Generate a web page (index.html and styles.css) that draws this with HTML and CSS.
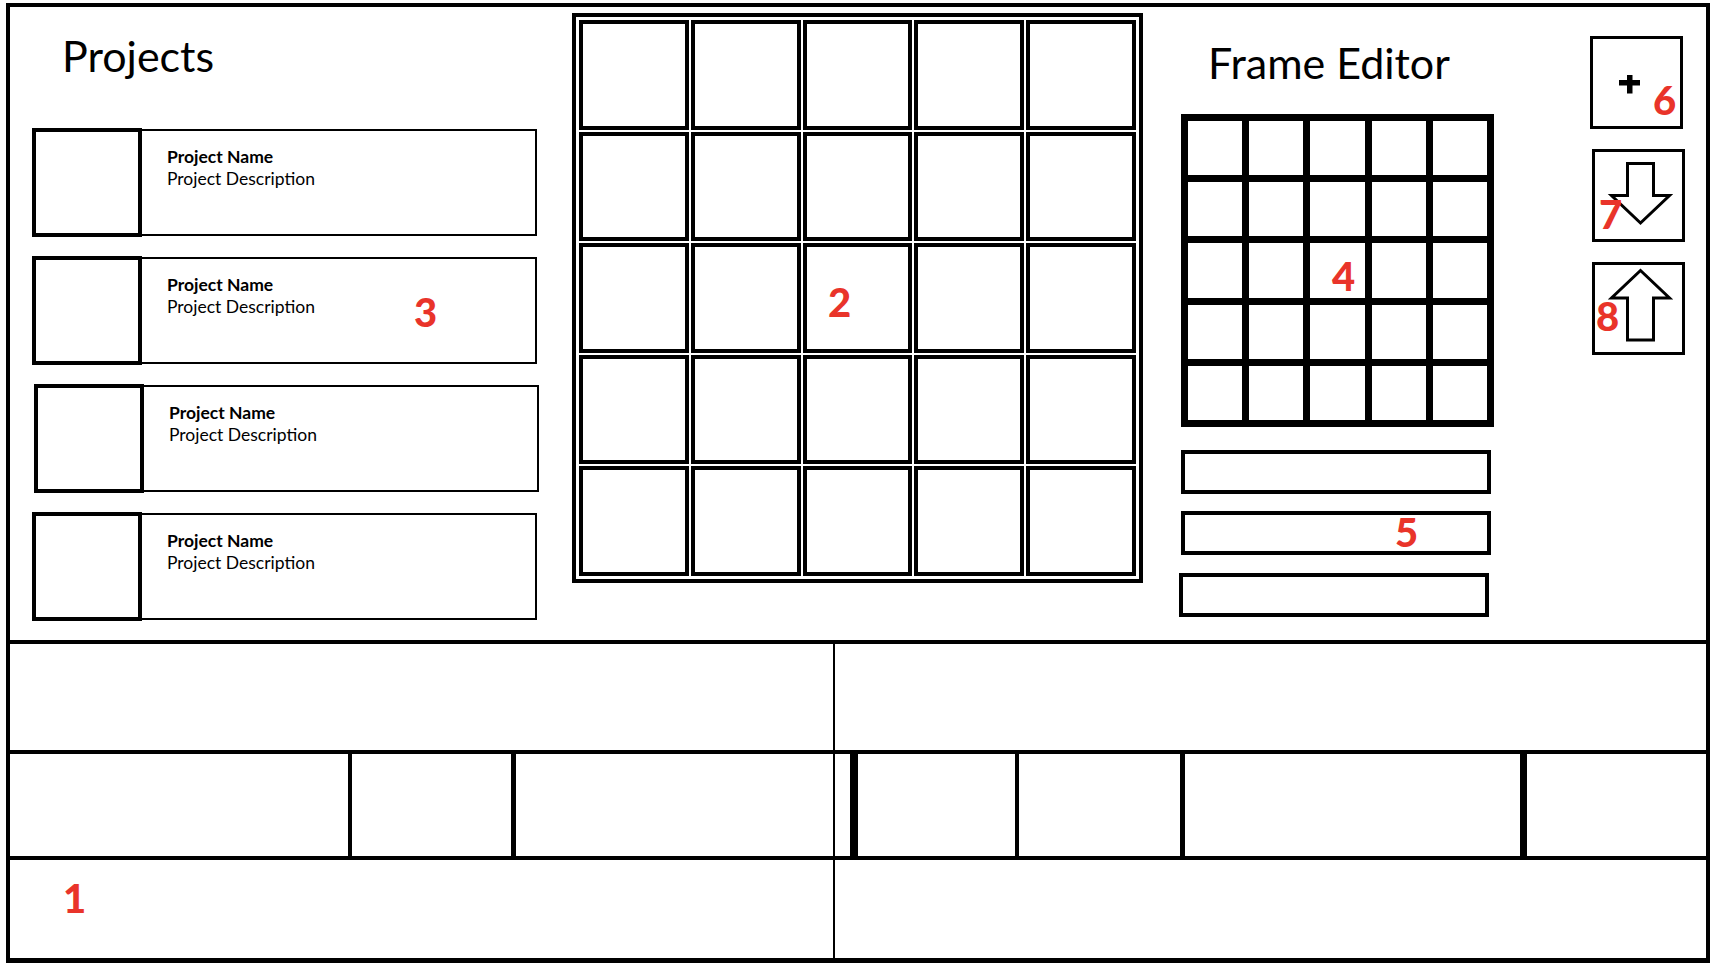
FILE: index.html
```html
<!DOCTYPE html>
<html lang="en">
<head>
    <meta charset="UTF-8">
    <meta name="viewport" content="width=device-width, initial-scale=1.0">
    <title>Frame Editor Wireframe</title>
    <link rel="stylesheet" href="styles.css">
</head>
<body>
    <div class="frame">
        <div class="top">
            <section class="projects">
                <h1 class="title">Projects</h1>
                <div class="card first">
                    <div class="thumb"></div>
                    <div class="info">
                        <p class="name">Project Name</p>
                        <p class="desc">Project Description</p>
                    </div>
                </div>
                <div class="card">
                    <div class="thumb"></div>
                    <div class="info">
                        <p class="name">Project Name</p>
                        <p class="desc">Project Description</p>
                    </div>
                </div>
                <div class="card shifted">
                    <div class="thumb"></div>
                    <div class="info">
                        <p class="name">Project Name</p>
                        <p class="desc">Project Description</p>
                    </div>
                </div>
                <div class="card">
                    <div class="thumb"></div>
                    <div class="info">
                        <p class="name">Project Name</p>
                        <p class="desc">Project Description</p>
                    </div>
                </div>
            </section>

            <div class="board">
                <div class="cell"></div><div class="cell"></div><div class="cell"></div><div class="cell"></div><div class="cell"></div>
                <div class="cell"></div><div class="cell"></div><div class="cell"></div><div class="cell"></div><div class="cell"></div>
                <div class="cell"></div><div class="cell"></div><div class="cell"></div><div class="cell"></div><div class="cell"></div>
                <div class="cell"></div><div class="cell"></div><div class="cell"></div><div class="cell"></div><div class="cell"></div>
                <div class="cell"></div><div class="cell"></div><div class="cell"></div><div class="cell"></div><div class="cell"></div>
            </div>

            <section class="editor">
                <h1 class="title editor-title">Frame Editor</h1>
                <div class="mini">
                    <div class="dot"></div><div class="dot"></div><div class="dot"></div><div class="dot"></div><div class="dot"></div>
                    <div class="dot"></div><div class="dot"></div><div class="dot"></div><div class="dot"></div><div class="dot"></div>
                    <div class="dot"></div><div class="dot"></div><div class="dot"></div><div class="dot"></div><div class="dot"></div>
                    <div class="dot"></div><div class="dot"></div><div class="dot"></div><div class="dot"></div><div class="dot"></div>
                    <div class="dot"></div><div class="dot"></div><div class="dot"></div><div class="dot"></div><div class="dot"></div>
                </div>
                <div class="field"></div>
                <div class="field"></div>
                <div class="field last"></div>
            </section>

            <div class="tools">
                <div class="tool">
                    <svg width="87" height="87" viewBox="0 0 87 87">
                        <rect x="26" y="41" width="21" height="5.5" fill="#000"/>
                        <rect x="34" y="36" width="5.5" height="18.5" fill="#000"/>
                    </svg>
                </div>
                <div class="tool moved">
                    <svg width="87" height="87" viewBox="0 0 87 87">
                        <polygon points="32.5,11.5 58.5,11.5 58.5,43.5 74.5,43.5 45.5,71 16.5,43.5 32.5,43.5" fill="none" stroke="#000" stroke-width="3"/>
                    </svg>
                </div>
                <div class="tool moved">
                    <svg width="87" height="87" viewBox="0 0 87 87">
                        <polygon points="45.5,5.5 74.5,33 58.5,33 58.5,75 32.5,75 32.5,33 16.5,33" fill="none" stroke="#000" stroke-width="3"/>
                    </svg>
                </div>
            </div>
        </div>

        <div class="bottom">
            <div class="row row-a">
                <div class="half"></div>
                <div class="rest"></div>
            </div>
            <div class="row row-b">
                <div class="col c1"></div>
                <div class="col c2"></div>
                <div class="col c3"></div>
                <div class="col gap"></div>
                <div class="col c4"></div>
                <div class="col c5"></div>
                <div class="col c6"></div>
                <div class="rest"></div>
            </div>
            <div class="row row-c">
                <div class="half"></div>
                <div class="rest"></div>
            </div>
        </div>

        <span class="mark m1">1</span>
        <span class="mark m2">2</span>
        <span class="mark m3">3</span>
        <span class="mark m4">4</span>
        <span class="mark m5">5</span>
        <span class="mark m6">6</span>
        <span class="mark m7">7</span>
        <span class="mark m8">8</span>
    </div>
</body>
</html>
```

FILE: styles.css
```css
*{
    padding: 0px;
    margin: 0px;
    box-sizing: border-box;
    font-family: "Lato", "Liberation Sans", sans-serif;
}
html, body{
    background-color: white;
    overflow: hidden;
}
.frame{
    position: relative;
    width: 1704px;
    height: 960px;
    margin: 3px 0 0 6px;
    border: 4px solid black;
    border-bottom-width: 5px;
    display: flex;
    flex-direction: column;
}
.top{
    display: flex;
    align-items: flex-start;
    height: 633px;
}
.title{
    font-size: 43px;
    line-height: 44px;
    font-weight: 400;
    color: black;
}

/* projects list */
.projects{
    width: 529px;
    padding-left: 22px;
}
.projects .title{
    margin: 27px 0 0 30px;
}
.card{
    display: flex;
    width: 505px;
    height: 109px;
    margin-top: 19px;
}
.card.first{
    margin-top: 50px;
}
.card.shifted{
    margin-left: 2px;
}
.thumb{
    width: 110px;
    border: 4px solid black;
}
.info{
    flex: 1;
    margin: 1px 0;
    border: 2px solid black;
    border-left: none;
    padding: 15px 0 0 25px;
}
.name, .desc{
    font-size: 17.5px;
    line-height: 22px;
    color: black;
}
.name{
    font-weight: 700;
}

/* big frame grid */
.board{
    margin: 6px 0 0 33px;
    width: 571px;
    height: 570px;
    border: 4px solid black;
    padding: 3px;
    display: grid;
    grid-template-columns: repeat(5, 1fr);
    grid-template-rows: repeat(5, 1fr);
    gap: 2px;
}
.cell{
    border: 4px solid black;
}

/* frame editor */
.editor{
    margin-left: 36px;
    width: 315px;
}
.editor-title{
    margin: 34px 0 0 29px;
}
.mini{
    margin: 29px 0 0 2px;
    width: 313px;
    height: 313px;
    background-color: black;
    padding: 7px;
    display: grid;
    grid-template-columns: repeat(5, 1fr);
    grid-template-rows: repeat(5, 1fr);
    gap: 7px;
}
.dot{
    background-color: white;
}
.field{
    width: 310px;
    height: 44px;
    border: 4px solid black;
    margin: 17px 0 0 2px;
}
.mini + .field{
    margin-top: 23px;
}
.field.last{
    margin: 18px 0 0 0;
}

/* side buttons */
.tools{
    margin-left: 96px;
    padding-top: 29px;
}
.tool{
    width: 93px;
    height: 93px;
    border: 3px solid black;
}
.tool svg{
    display: block;
}
.tool.moved{
    margin: 20px 0 0 2px;
}

/* bottom table */
.bottom{
    border-top: 4px solid black;
}
.row{
    display: flex;
    border-bottom: 4px solid black;
}
.row-a{
    height: 110px;
}
.row-b{
    height: 106px;
}
.row-c{
    height: 98px;
    border-bottom: none;
}
.half{
    width: 825px;
    border-right: 2px solid black;
}
.rest{
    flex: 1;
}
.col{
    border-right: 4px solid black;
}
.c1{
    width: 342px;
}
.c2{
    width: 164px;
    border-right-width: 5px;
}
.c3{
    width: 319px;
    border-right-width: 2px;
}
.gap{
    width: 15px;
    border-right: none;
}
.c4{
    width: 169px;
    border-left: 8px solid black;
}
.c5{
    width: 166px;
    border-right-width: 5px;
}
.c6{
    width: 342px;
    border-right-width: 7px;
}

/* red callout numbers */
.mark{
    position: absolute;
    font-size: 40px;
    line-height: 40px;
    font-weight: 900;
    color: #e9342a;
}
.m1{ left: 53px; top: 871px; }
.m2{ left: 818px; top: 275px; }
.m3{ left: 404px; top: 285px; }
.m4{ left: 1322px; top: 249px; }
.m5{ left: 1385px; top: 505px; }
.m6{ left: 1643px; top: 73px; }
.m7{ left: 1589px; top: 187px; }
.m8{ left: 1586px; top: 289px; }
```
